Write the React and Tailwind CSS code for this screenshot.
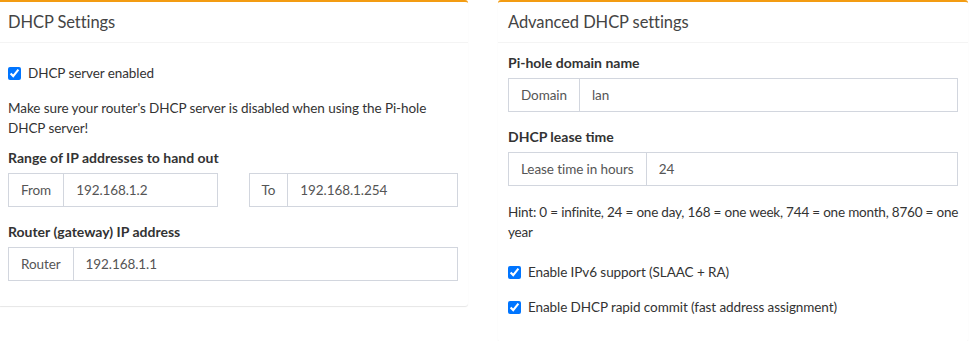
import { useState } from "react";

const font = { fontFamily: "Lato, 'Noto Sans', sans-serif" };

function Card({ title, children, className = "" }) {
  return (
    <div className={`w-[470px] bg-white rounded-[3px] border-t-2 border-[#f39c12] shadow-[0_1px_1px_rgba(0,0,0,0.1)] ${className}`}>
      <div className="px-[10px] py-[10px] border-b border-[#f4f4f4]">
        <h3 className="text-[16.5px] leading-[20px] text-[#444]">{title}</h3>
      </div>
      {children}
    </div>
  );
}

function InputGroup({ label, value }) {
  return (
    <div className="flex h-[34px] text-[13.5px] tracking-[-0.08px] text-[#555]">
      <span className="flex items-center px-[12px] border border-[#d2d6de] bg-white whitespace-nowrap">{label}</span>
      <input
        readOnly
        value={value}
        className="flex-1 min-w-0 px-[12px] border border-l-0 border-[#d2d6de] text-[#555] outline-none"
        style={font}
      />
    </div>
  );
}

function Check({ label, className = "" }) {
  const [on, setOn] = useState(true);
  return (
    <label className={`flex items-center leading-[20px] ${className}`}>
      <input
        type="checkbox"
        checked={on}
        onChange={() => setOn(!on)}
        className="m-0 w-[13px] h-[13px] accent-[#0075ff]"
      />
      <span className="ml-[7px]">{label}</span>
    </label>
  );
}

export default function App() {
  return (
    <div className="w-[975px] h-[341px] bg-white overflow-hidden text-[13.5px] tracking-[-0.08px] text-[#333]" style={font}>
      <div className="flex items-start gap-[30px] ml-[-2px]">
        <Card title="DHCP Settings">
          <div className="px-[10px] pt-[10px] pb-[25px]">
            <Check label="DHCP server enabled" className="mt-[10px]" />
            <p className="mt-[15px] leading-[20px]">
              Make sure your router's DHCP server is disabled when using the Pi-hole DHCP server!
            </p>
            <div className="mt-[10px] font-bold text-[14px] tracking-normal leading-[20px]">Range of IP addresses to hand out</div>
            <div className="mt-[5px] grid grid-cols-2 gap-[31px]">
              <InputGroup label="From" value="192.168.1.2" />
              <InputGroup label="To" value="192.168.1.254" />
            </div>
            <div className="mt-[15px] font-bold text-[14px] tracking-normal leading-[20px]">Router (gateway) IP address</div>
            <div className="mt-[5px]">
              <InputGroup label="Router" value="192.168.1.1" />
            </div>
          </div>
        </Card>
        <Card title="Advanced DHCP settings">
          <div className="px-[10px] pt-[10px] pb-[25px]">
            <div className="font-bold text-[14px] tracking-normal leading-[20px]">Pi-hole domain name</div>
            <div className="mt-[5px]">
              <InputGroup label="Domain" value="lan" />
            </div>
            <div className="mt-[15px] font-bold text-[14px] tracking-normal leading-[20px]">DHCP lease time</div>
            <div className="mt-[5px]">
              <InputGroup label="Lease time in hours" value="24" />
            </div>
            <p className="mt-[16px] mr-[-10px] leading-[20px] tracking-[-0.2px]">
              Hint: 0 = infinite, 24 = one day, 168 = one week, 744 = one month, 8760 = one year
            </p>
            <Check label="Enable IPv6 support (SLAAC + RA)" className="mt-[20px]" />
            <Check label="Enable DHCP rapid commit (fast address assignment)" className="mt-[15px]" />
          </div>
        </Card>
      </div>
    </div>
  );
}
